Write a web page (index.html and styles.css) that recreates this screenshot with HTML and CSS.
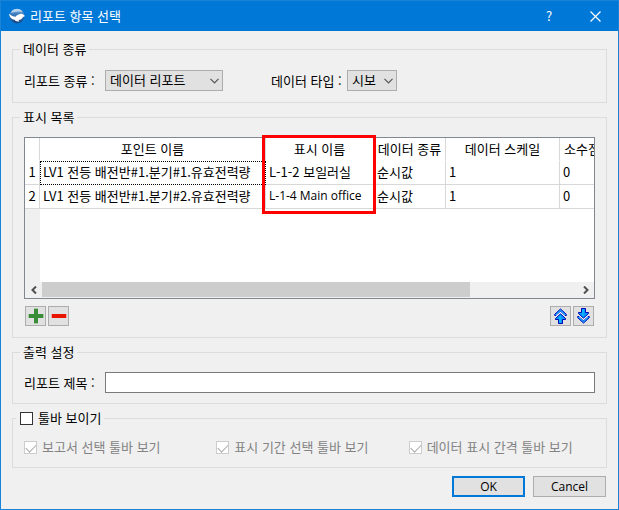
FILE: index.html
```html
<!DOCTYPE html>
<html lang="ko">
<head>
    <meta charset="UTF-8">
    <meta name="viewport" content="width=device-width, initial-scale=1.0">
    <title>리포트 항목 선택</title>
    <link rel="stylesheet" href="styles.css">
</head>
<body>
    <div class="dialog">
        <header class="titlebar">
            <svg class="app-icon" viewBox="0 0 16 16">
                <defs>
                    <linearGradient id="globe" x1="0" y1="0" x2="0" y2="1">
                        <stop offset="0" stop-color="#9fc6ea"/>
                        <stop offset="0.35" stop-color="#3f7fc0"/>
                        <stop offset="1" stop-color="#173f7d"/>
                    </linearGradient>
                </defs>
                <circle cx="8" cy="8" r="7.3" fill="url(#globe)"/>
                <path d="M2 5Q3 1 8 .9Q12 1 13.500 4Q8 2.500 2 5z" fill="#c4dcf2" opacity=".8"/>
                <path d="M0 5.500C.4 9 2.500 11.500 5.600 11.800C6.400 13.200 8 13.800 10.400 13.400L9.400 12C11.600 11.800 13 11 13.600 9.600C14.400 8.600 15.200 8.200 16 8.200C15 6.400 13 5.400 11 6C9 6.400 7.600 7.400 6.600 8.800C4.600 8.600 2 8 0 5.500z" fill="#fff"/>
            </svg>
            <h1>리포트 항목 선택</h1>
            <button class="title-btn" type="button" aria-label="도움말">?</button>
            <button class="title-btn" type="button" aria-label="닫기">
                <svg width="11" height="11" viewBox="0 0 11 11"><path d="M.5.5l10 10M10.5.5l-10 10" stroke="#fff" stroke-width="1.2" fill="none"/></svg>
            </button>
        </header>

        <form class="content">
            <fieldset>
                <legend>데이터 종류</legend>
                <div class="row">
                    <label class="field-label" for="reportType">리포트 종류 :</label>
                    <div class="combo combo-report">
                        <select id="reportType"><option>데이터 리포트</option></select>
                        <svg width="9" height="6" viewBox="0 0 9 6"><path d="M.5.8l4 4 4-4" stroke="#555" fill="none" stroke-width="1.2"/></svg>
                    </div>
                    <label class="field-label type-label" for="dataType">데이터 타입 :</label>
                    <div class="combo combo-time">
                        <select id="dataType"><option>시보</option></select>
                        <svg width="9" height="6" viewBox="0 0 9 6"><path d="M.5.8l4 4 4-4" stroke="#555" fill="none" stroke-width="1.2"/></svg>
                    </div>
                </div>
            </fieldset>

            <fieldset class="list-group">
                <legend>표시 목록</legend>
                <div class="list-wrap">
                    <div class="list">
                        <div class="list-view">
                            <table>
                                <colgroup>
                                    <col class="c-num"><col class="c-point"><col class="c-name"><col class="c-kind"><col class="c-scale"><col class="c-digits">
                                </colgroup>
                                <thead>
                                    <tr>
                                        <th></th>
                                        <th>포인트 이름</th>
                                        <th>표시 이름</th>
                                        <th>데이터 종류</th>
                                        <th>데이터 스케일</th>
                                        <th class="last">소수점 자리</th>
                                    </tr>
                                </thead>
                                <tbody>
                                    <tr>
                                        <th>1</th>
                                        <td class="focused">LV1 전등 배전반#1.분기#1.유효전력량</td>
                                        <td>L-1-2 보일러실</td>
                                        <td>순시값</td>
                                        <td>1</td>
                                        <td>0</td>
                                    </tr>
                                    <tr>
                                        <th>2</th>
                                        <td>LV1 전등 배전반#1.분기#2.유효전력량</td>
                                        <td class="latin">L-1-4 Main office</td>
                                        <td>순시값</td>
                                        <td>1</td>
                                        <td>0</td>
                                    </tr>
                                </tbody>
                            </table>
                            <div class="gutter"></div>
                        </div>
                        <div class="scrollbar">
                            <button class="scroll-btn" type="button" aria-label="왼쪽">
                                <svg width="6" height="8" viewBox="0 0 6 8"><path d="M5 .5L1.500 4 5 7.500" stroke="#505050" stroke-width="2" fill="none"/></svg>
                            </button>
                            <div class="track"><div class="thumb"></div></div>
                            <button class="scroll-btn" type="button" aria-label="오른쪽">
                                <svg width="6" height="8" viewBox="0 0 6 8"><path d="M1 .5L4.500 4 1 7.500" stroke="#505050" stroke-width="2" fill="none"/></svg>
                            </button>
                        </div>
                    </div>
                    <div class="highlight"></div>
                </div>
                <div class="tools">
                    <button class="tool" type="button" aria-label="추가">
                        <svg width="16" height="16" viewBox="0 0 16 16"><path d="M6 0h4v16H6zM0 6h16v4H0z" fill="#a5cba5"/><path d="M6 1h4v5h5v4h-5v5H6v-5H1V6h5z" fill="#388e38"/></svg>
                    </button>
                    <button class="tool" type="button" aria-label="삭제">
                        <svg width="16" height="16" viewBox="0 0 16 16"><path d="M0 6h16v4H0z" fill="#f0a098"/><path d="M1 6h14v4H1z" fill="#e81400"/></svg>
                    </button>
                    <button class="tool tool-up" type="button" aria-label="위로">
                        <svg width="13" height="16" viewBox="0 0 13 16">
                            <path d="M6.500 1L.7 6.300v1.200h1.800l4-3.700 4 3.700h1.800V6.300z" fill="#1ea5ff" stroke="#0000b4"/>
                            <path d="M2.500 8.300l4-3.700 4 3.700" stroke="#fff" stroke-width="1.300" fill="none"/>
                            <path d="M6.500 5.800L1.500 10.500v1H4.500v4h4v-4h3v-1z" fill="#0a96ff" stroke="#0000b4"/>
                            <path d="M6 8v7" stroke="#00d2ff"/>
                        </svg>
                    </button>
                    <button class="tool" type="button" aria-label="아래로">
                        <svg class="flip" width="13" height="16" viewBox="0 0 13 16">
                            <path d="M6.500 1L.7 6.300v1.200h1.800l4-3.700 4 3.700h1.800V6.300z" fill="#1ea5ff" stroke="#0000b4"/>
                            <path d="M2.500 8.300l4-3.700 4 3.700" stroke="#fff" stroke-width="1.300" fill="none"/>
                            <path d="M6.500 5.800L1.500 10.500v1H4.500v4h4v-4h3v-1z" fill="#0a96ff" stroke="#0000b4"/>
                            <path d="M6 8v7" stroke="#00d2ff"/>
                        </svg>
                    </button>
                </div>
            </fieldset>

            <fieldset class="output-group">
                <legend>출력 설정</legend>
                <div class="row">
                    <label class="field-label" for="reportTitle">리포트 제목 :</label>
                    <input class="text-input" id="reportTitle" type="text">
                </div>
            </fieldset>

            <fieldset class="toolbar-group">
                <legend class="check-legend"><label class="check"><input type="checkbox">툴바 보이기</label></legend>
                <div class="checks">
                    <label class="check disabled"><input type="checkbox" checked disabled>보고서 선택 툴바 보기</label>
                    <label class="check disabled"><input type="checkbox" checked disabled>표시 기간 선택 툴바 보기</label>
                    <label class="check disabled"><input type="checkbox" checked disabled>데이터 표시 간격 툴바 보기</label>
                </div>
            </fieldset>

            <div class="actions">
                <button class="btn btn-default" type="button">OK</button>
                <button class="btn" type="button">Cancel</button>
            </div>
        </form>
    </div>
</body>
</html>
```
FILE: styles.css
```css
* {
    box-sizing: border-box;
    margin: 0;
    padding: 0;
}

body, button, input, select {
    font-family: "Noto Sans CJK KR", "Noto Sans", sans-serif;
    font-size: 13px;
    line-height: 16px;
    color: #000;
}

button {
    border: none;
    background: none;
}

svg {
    display: block;
}

.dialog {
    min-height: 100vh;
    border: 1px solid #1883d7;
    background: #f0f0f0;
}

/* Title bar */
.titlebar {
    display: flex;
    align-items: center;
    height: 30px;
    padding-left: 8px;
    background: #0078d7;
    color: #fff;
}

.app-icon {
    width: 16px;
    height: 16px;
    margin-right: 5px;
}

.titlebar h1 {
    flex: 1;
    font-size: 13px;
    font-weight: normal;
    line-height: 16px;
}

.title-btn {
    display: flex;
    align-items: center;
    justify-content: center;
    width: 46px;
    height: 30px;
    color: #fff;
}

.content {
    padding: 10px 11px 12px;
}

/* Groups */
fieldset {
    min-width: 0;
    margin-bottom: 6px;
    padding: 12px 11px 11px;
    border: 1px solid #dcdcdc;
}

legend {
    margin-left: -4px;
    padding: 0 3px;
    height: 17px;
}

.list-group {
    padding-top: 11px;
}

.output-group {
    padding-top: 11px;
    padding-bottom: 10px;
}

.row {
    display: flex;
    align-items: center;
}

.field-label {
    width: 81px;
    white-space: nowrap;
}

.type-label {
    width: 76px;
    margin-left: 48px;
}

.combo {
    position: relative;
}

.combo select {
    display: block;
    appearance: none;
    width: 100%;
    height: 21px;
    padding: 0 4px 1px;
    border: 1px solid #adadad;
    border-radius: 0;
    background: #e1e1e1;
}

.combo svg {
    position: absolute;
    right: 4px;
    top: 8px;
    pointer-events: none;
}

.combo-report {
    width: 118px;
}

.combo-time {
    width: 50px;
}

/* Item list */
.list-wrap {
    position: relative;
}

.list {
    border: 1px solid #828790;
    background: #fff;
}

.list-view {
    display: flex;
    flex-direction: column;
    height: 144px;
    overflow: hidden;
}

table {
    table-layout: fixed;
    width: 694px;
    border-collapse: separate;
    border-spacing: 0;
}

.c-num { width: 15px; }
.c-point { width: 226px; }
.c-name { width: 108px; }
.c-kind { width: 72px; }
.c-scale { width: 114px; }

th, td {
    height: 24px;
    padding-bottom: 2px;
    border-right: 1px solid #d8d8d8;
    border-bottom: 1px solid #d8d8d8;
    font-weight: normal;
    white-space: nowrap;
    overflow: hidden;
}

thead th {
    height: 23px;
    padding-bottom: 0;
    border-bottom-color: #fff;
}

thead .last {
    padding-left: 4px;
    text-align: left;
}

td {
    padding: 0 3px 2px;
}

.focused {
    padding: 0 2px 2px;
    border: 1px dotted #000;
}

.latin {
    font-family: "Open Sans", "Noto Sans CJK KR", sans-serif;
    font-size: 12px;
}

.gutter {
    flex: 1;
    width: 15px;
    background: #f0f0f0;
}

.scrollbar {
    display: flex;
    height: 16px;
    background: #f0f0f0;
}

.scroll-btn {
    display: flex;
    align-items: center;
    justify-content: center;
    width: 17px;
}

.track {
    flex: 1;
}

.thumb {
    width: 80%;
    height: 15px;
    background: #cdcdcd;
}

/* Marks the display name column */
.highlight {
    position: absolute;
    top: -2px;
    left: 238px;
    width: 114px;
    height: 79px;
    border: 3px solid #f00;
}

.tools {
    display: flex;
    gap: 2px;
    padding: 7px 1px 0;
}

.tool {
    display: flex;
    align-items: center;
    justify-content: center;
    width: 21px;
    height: 20px;
    border: 1px solid #adadad;
    background: #e1e1e1;
}

.tool-up {
    margin-left: auto;
}

.flip {
    transform: scaleY(-1);
}

.text-input {
    flex: 1;
    min-width: 0;
    height: 21px;
    padding: 0 4px;
    border: 1px solid #7a7a7a;
    background: #fff;
}

/* Check boxes */
.check {
    display: flex;
    align-items: center;
    gap: 5px;
    white-space: nowrap;
}

.check input {
    appearance: none;
    flex: none;
    width: 13px;
    height: 13px;
    border: 1px solid #333;
    background: #fff;
}

.check input:checked::before {
    content: "";
    display: block;
    width: 9px;
    height: 5px;
    margin: 2px 1px;
    border-left: 1px solid #aaa;
    border-bottom: 1px solid #aaa;
    transform: rotate(-45deg);
}

.disabled {
    color: #838383;
}

.check input:disabled {
    border-color: #ccc;
}

.check-legend {
    margin-left: -8px;
    padding: 0 3px 0 4px;
}

.checks {
    display: grid;
    grid-template-columns: repeat(3, 1fr);
    gap: 6px;
}

.toolbar-group {
    margin-bottom: 8px;
    padding-bottom: 12px;
}

.actions {
    display: flex;
    justify-content: flex-end;
    gap: 8px;
    padding-right: 1px;
}

.btn {
    width: 73px;
    height: 21px;
    border: 1px solid #adadad;
    background: #e1e1e1;
    font-family: "Open Sans", "Noto Sans CJK KR", sans-serif;
    font-size: 12px;
}

.btn-default {
    border: 2px solid #0078d7;
}
```
